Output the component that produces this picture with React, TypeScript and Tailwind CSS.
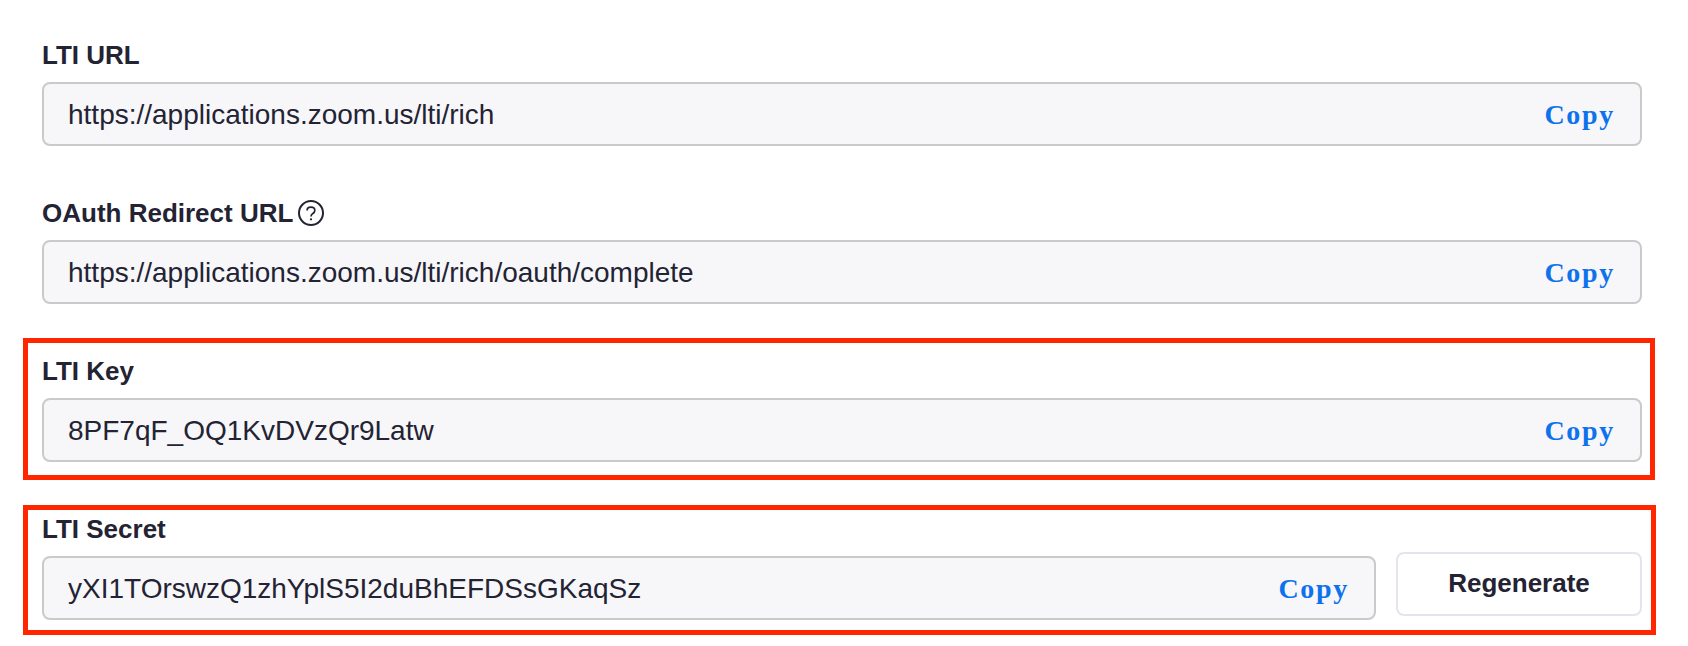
import type { ReactNode } from 'react';

function HelpIcon() {
  return (
    <svg className="h-[26px] w-[26px] shrink-0" viewBox="0 0 26 26" fill="none" stroke="#232333">
      <circle cx="13" cy="13" r="12" strokeWidth="2" />
      <path d="M9.1 10.500C9.100 8.500 10.600 7.200 12.900 7.200s3.900 1.300 3.900 3.200c0 1.500-.8 2.300-2 3.100C13.400 14.400 13 15 13 16.600" strokeWidth="1.700" />
      <circle cx="13" cy="19.300" r="1.150" fill="#232333" stroke="none" />
    </svg>
  );
}

function Label({ children }: { children: ReactNode }) {
  return (
    <div className="flex h-[30px] items-center gap-[5px] text-[26px] leading-[30px] font-bold whitespace-nowrap">
      {children}
    </div>
  );
}

function ValueBox({ value }: { value: string }) {
  return (
    <div className="flex h-16 min-w-0 flex-1 items-center justify-between rounded-lg border-2 border-[#cacaca] bg-[#f7f7fa] pt-0.5 pr-[25px] pl-6 text-[28px] leading-8">
      <span>{value}</span>
      <button className="font-['Liberation_Serif',serif] font-bold tracking-[1.7px] text-[#0e72ed]">Copy</button>
    </div>
  );
}

export default function App() {
  return (
    <main className="flex h-[646px] w-[1688px] flex-col bg-white pt-10 font-['Liberation_Sans',Arial,sans-serif] text-[#232333]">
      <section className="ml-[42px] flex w-[1600px] flex-col gap-3">
        <Label>LTI URL</Label>
        <div className="flex">
          <ValueBox value="https://applications.zoom.us/lti/rich" />
        </div>
      </section>

      <section className="mt-[52px] ml-[42px] flex w-[1600px] flex-col gap-3">
        <Label>
          <span>OAuth Redirect URL</span>
          <HelpIcon />
        </Label>
        <div className="flex">
          <ValueBox value="https://applications.zoom.us/lti/rich/oauth/complete" />
        </div>
      </section>

      <section className="mt-[34px] ml-[23px] flex w-[1632px] flex-col gap-3 border-5 border-[#ff2600] pt-[13px] pr-2 pb-[13px] pl-[14px]">
        <Label>LTI Key</Label>
        <div className="flex">
          <ValueBox value="8PF7qF_OQ1KvDVzQr9Latw" />
        </div>
      </section>

      <section className="mt-[25px] ml-[23px] flex w-[1633px] flex-col border-5 border-[#ff2600] pt-1 pr-[9px] pb-[10px] pl-[14px]">
        <Label>LTI Secret</Label>
        <div className="mt-2 flex items-end gap-5">
          <ValueBox value="yXI1TOrswzQ1zhYplS5I2duBhEFDSsGKaqSz" />
          <button className="mb-1 h-16 w-[246px] rounded-lg border-2 border-[#e4e4ed] bg-white pb-0.5 text-[26px] leading-[30px] font-bold">
            Regenerate
          </button>
        </div>
      </section>
    </main>
  );
}
